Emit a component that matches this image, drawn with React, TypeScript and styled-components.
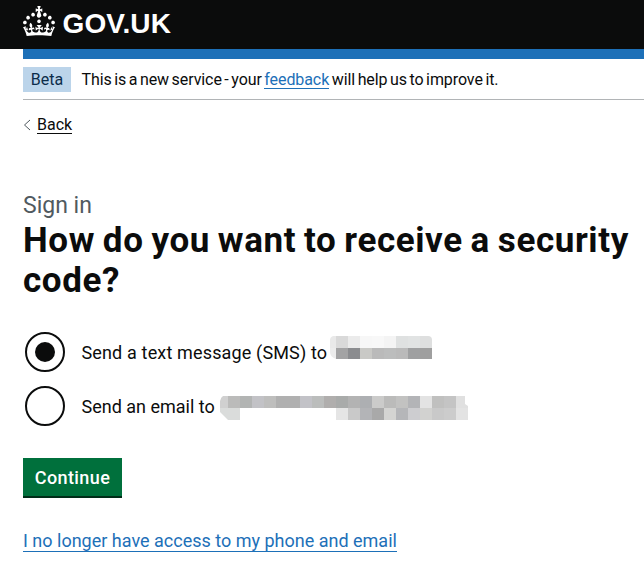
import React, { useState } from "react";
import styled, { createGlobalStyle } from "styled-components";

const GlobalStyle = createGlobalStyle`
  *, *::before, *::after { box-sizing: border-box; }
  body {
    margin: 0;
    overflow: hidden;
    background: #fff;
    color: #0b0c0c;
    font-family: Roboto, "Noto Sans", sans-serif;
    font-weight: 400;
  }
`;

const Header = styled.header`
  display: flex;
  align-items: flex-start;
  height: 49px;
  padding: 6px 0 0 23px;
  background: #0b0c0c;
  color: #fff;
`;

const Crown = styled.svg`
  flex: none;
  width: 32px;
  height: 30px;
  fill: currentColor;
`;

const Wordmark = styled.span`
  margin: 0 0 0 7.5px;
  font-family: "Liberation Sans", sans-serif;
  font-size: 28px;
  line-height: 36px;
  font-weight: 700;
  letter-spacing: 0.1px;
  white-space: nowrap;
`;

const Container = styled.div`
  padding-left: 23px;
`;

const BlueBar = styled.div`
  height: 10px;
  background: #1d70b8;
`;

const PhaseBanner = styled.div`
  display: flex;
  align-items: center;
  height: 41px;
  border-bottom: 1px solid #b1b4b6;
  font-size: 16px;
  line-height: 20px;
  white-space: nowrap;
`;

const Tag = styled.strong`
  width: 48px;
  height: 25px;
  margin-right: 10.5px;
  background: #bbd4ea;
  color: #0c2d4a;
  font-weight: 400;
  line-height: 25px;
  text-align: center;
`;

const Phase = styled.span`
  padding-top: 1px;
  letter-spacing: -0.09px;
  word-spacing: -1.3px;
`;

const Link = styled.a<{ $size?: number; $tone?: string }>`
  display: inline-block;
  color: ${(p) => p.$tone ?? "#1d70b8"};
  border-bottom: 1px solid currentColor;
  font-size: ${(p) => p.$size ?? 16}px;
  line-height: 1.1;
  text-decoration: none;
  white-space: nowrap;
`;

const BackRow = styled.nav`
  display: flex;
  align-items: center;
  gap: 6px;
  height: 18px;
  margin-top: 16px;
`;

const Chevron = styled.svg`
  width: 8px;
  height: 12px;
  fill: none;
  stroke: #505a5f;
`;

const Caption = styled.div`
  margin-top: 57px;
  color: #505a5f;
  font-size: 23px;
  line-height: 30px;
`;

const Title = styled.h1`
  margin: 0;
  font-size: 35px;
  line-height: 40px;
  font-weight: 700;
  letter-spacing: 0.6px;
  word-spacing: -1.4px;
  white-space: nowrap;
`;

const Options = styled.div`
  display: flex;
  flex-direction: column;
  gap: 14px;
  margin: 31px 0 0 2px;
`;

const Option = styled.label`
  display: flex;
  align-items: center;
  height: 40px;
  font-size: 18px;
  cursor: pointer;
`;

const Radio = styled.input`
  appearance: none;
  display: grid;
  place-items: center;
  flex: none;
  width: 40px;
  height: 40px;
  margin: 0 16.5px 0 0;
  border: 2px solid #0b0c0c;
  border-radius: 50%;
  &:checked::before {
    content: "";
    width: 20px;
    height: 20px;
    border-radius: 50%;
    background: #0b0c0c;
  }
`;

const OptionText = styled.span<{ $width: number; $spacing: number }>`
  width: ${(p) => p.$width}px;
  letter-spacing: ${(p) => p.$spacing}px;
  white-space: nowrap;
`;

const Mosaic = styled.svg`
  display: block;
  flex: none;
  height: 24px;
  shape-rendering: crispEdges;
`;

const Button = styled.button`
  display: block;
  width: 99px;
  height: 40px;
  margin: 32px 0 33px;
  padding: 1px 0 0;
  border: 0;
  border-bottom: 2px solid #002d18;
  background: #00703c;
  color: #fff;
  font: 500 18px/36px Roboto, sans-serif;
  letter-spacing: 0.4px;
`;

type Cells = (string | null)[];

const phoneTop: Cells = ["#e9e9e9", "#d9d9d9", "#ebebeb", "#f7f7f7", "#f8f8f8", "#f4f4f4", "#dfe1e1", "#e1e3e3", "#dedfdf"];
const phoneBottom: Cells = ["#ececec", "#a3a3a4", "#8b8c8f", "#c9c9c6", "#bababa", "#bcbdbd", "#bababa", "#9fa0a1", "#9f9f9f"];
const mailTop: Cells = [
  "#d0d0d0", "#bbbbba", "#b2b4b3", "#c2c2c6", "#bebebd", "#b0b0b0", "#b0b0b0", "#c2c2c7", "#bbbdbc", "#b0aead", "#a9abaa",
  "#b3b3b3", "#adafb2", "#cbcbca", "#bbbbba", "#c2c2c1", "#b3b4b7", "#e3e3e3", "#c0c0bf", "#c4c4c4", "#e0e0e0",
];
const mailBottom: Cells = [
  "#dadcdb", "#dadcdb", null, null, null, null, null, null, null, null, "#e5e5e5",
  "#c9c9c9", "#b3b4b7", "#a9a9a9", "#d4d4d2", "#b5b6b9", "#cdcdd0", "#d2d2d0", "#c9c9c9", "#cccccc", "#e3e3e3",
];

function Redaction({ id, width, inset, rows, outline }: { id: string; width: number; inset: number; rows: Cells[]; outline: string }) {
  return (
    <Mosaic width={width} viewBox={`0 0 ${width} 24`} aria-hidden="true">
      <clipPath id={id}>
        <path d={outline} />
      </clipPath>
      <g clipPath={`url(#${id})`}>
        {rows.map((row, y) =>
          row.map((fill, x) => fill && <rect key={`${x}-${y}`} x={x * 12 - inset} y={y * 12} width="12" height="12" fill={fill} />),
        )}
      </g>
    </Mosaic>
  );
}

const PhoneRow = styled.span`
  display: flex;
  padding-bottom: 8px;
`;

const MailRow = styled.span`
  display: flex;
  padding-top: 4px;
`;

export default function App() {
  const [method, setMethod] = useState("sms");
  return (
    <>
      <GlobalStyle />
      <Header>
        <Crown viewBox="0 0 32 30" aria-hidden="true">
          <path
            fillRule="evenodd"
            d="M22.6 10.4c-1 .4-2-.1-2.4-1-.4-.9.1-2 1-2.4.9-.4 2 .1 2.4 1s-.1 2-1 2.4m-5.9 6.7c-.9.4-2-.1-2.4-1-.4-.9.1-2 1-2.4.9-.4 2 .1 2.4 1s-.1 2-1 2.4m10.8-3.7c-1 .4-2-.1-2.4-1-.4-.9.1-2 1-2.4.9-.4 2 .1 2.4 1s0 2-1 2.4m3.3 4.8c-1 .4-2-.1-2.4-1-.4-.9.1-2 1-2.4.9-.4 2 .1 2.4 1s-.1 2-1 2.4M17 4.7l2.3 1.2V2.5l-2.3.7-.2-.2.9-3h-3.4l.9 3-.2.2c-.1.1-2.3-.7-2.3-.7v3.4L15 4.7c.1.1.1.2.2.2l-1.3 4c-.1.2-.1.4-.1.6 0 1.1.8 2 1.9 2.2h.7c1-.2 1.9-1.1 1.9-2.1 0-.2 0-.4-.1-.6l-1.3-4c-.1-.2 0-.2.1-.3m-7.6 5.7c.9.4 2-.1 2.4-1 .4-.9-.1-2-1-2.4-.9-.4-2 .1-2.4 1s0 2 1 2.4m-5 3c.9.4 2-.1 2.4-1 .4-.9-.1-2-1-2.4-.9-.4-2 .1-2.4 1s.1 2 1 2.4m-3.2 4.8c.9.4 2-.1 2.4-1 .4-.9-.1-2-1-2.4-.9-.4-2 .1-2.4 1s0 2 1 2.4m14.8 11c4.4 0 8.6.3 12.3.8 1.1-4.5 2.4-7 3.7-8.8l-2.5-.9c.2 1.3.3 1.9 0 2.7-.4-.4-.8-1.1-1.1-2.3l-1.2 4c.7-.5 1.3-.8 2-.9-1.1 2.5-2.6 3.1-3.5 3-1.1-.2-1.7-1.2-1.5-2.1.3-1.2 1.5-1.5 2.1-.1 1.1-2.3-.8-3-2-2.3 1.9-1.9 2.1-3.5.6-5.6-2.1 1.6-2.1 3.2-1.2 5.5-1.2-1.4-3.2-.6-2.5 1.6.9-1.4 2.1-.5 1.9.8-.2 1.1-1.7 2.1-3.5 1.9-2.7-.2-2.9-2.1-2.9-3.6.7-.1 1.9.5 2.9 1.9l.4-4.3c-1.1 1.1-2.1 1.4-3.2 1.4.4-1.2 2.1-3 2.1-3h-5.4s1.7 1.9 2.1 3c-1.1 0-2.1-.2-3.2-1.4l.4 4.3c1-1.4 2.2-2 2.9-1.9-.1 1.5-.2 3.4-2.9 3.6-1.9.2-3.4-.8-3.5-1.9-.2-1.3 1-2.2 1.9-.8.7-2.3-1.2-3-2.5-1.6.9-2.2.9-3.9-1.2-5.5-1.5 2-1.3 3.7.6 5.6-1.2-.7-3.1 0-2 2.3.6-1.4 1.8-1.1 2.1.1.2.9-.3 1.9-1.5 2.1-.9.2-2.4-.5-3.5-3 .6 0 1.2.3 2 .9l-1.2-4c-.3 1.1-.7 1.9-1.1 2.3-.3-.8-.2-1.4 0-2.7l-2.9.9C1.3 23 2.6 25.5 3.7 30c3.7-.5 7.9-.8 12.3-.8"
          />
        </Crown>
        <Wordmark>GOV.UK</Wordmark>
      </Header>
      <Container>
        <BlueBar />
        <PhaseBanner>
          <Tag>Beta</Tag>
          <Phase>
            This is a new service - your <Link href="#">feedback</Link> will help us to improve it.
          </Phase>
        </PhaseBanner>
        <BackRow>
          <Chevron viewBox="0 0 8 12">
            <path d="M7 1 1.5 6 7 11" />
          </Chevron>
          <Link href="#" $tone="#0b0c0c">Back</Link>
        </BackRow>
        <Caption>Sign in</Caption>
        <Title>
          How do you want to receive a security
          <br />
          code?
        </Title>
        <Options>
          <Option>
            <Radio type="radio" name="method" checked={method === "sms"} onChange={() => setMethod("sms")} />
            <OptionText $width={248.5} $spacing={0.15}>Send a text message (SMS) to</OptionText>
            <PhoneRow>
              <Redaction
                id="phone"
                width={102}
                inset={6}
                rows={[phoneTop, phoneBottom]}
                outline="M3 0H98Q102 0 102 4V23H6Q0 21 0 16V4Q0 1 3 0Z"
              />
            </PhoneRow>
          </Option>
          <Option>
            <Radio type="radio" name="method" checked={method === "email"} onChange={() => setMethod("email")} />
            <OptionText $width={138.5} $spacing={0}>Send an email to</OptionText>
            <MailRow>
              <Redaction
                id="mail"
                width={248}
                inset={4}
                rows={[mailTop, mailBottom]}
                outline="M3 0H245V8L248 10V24H8L0 16V5Q1 1 3 0Z"
              />
            </MailRow>
          </Option>
        </Options>
        <Button type="button">Continue</Button>
        <Link href="#" $size={18}>I no longer have access to my phone and email</Link>
      </Container>
    </>
  );
}
